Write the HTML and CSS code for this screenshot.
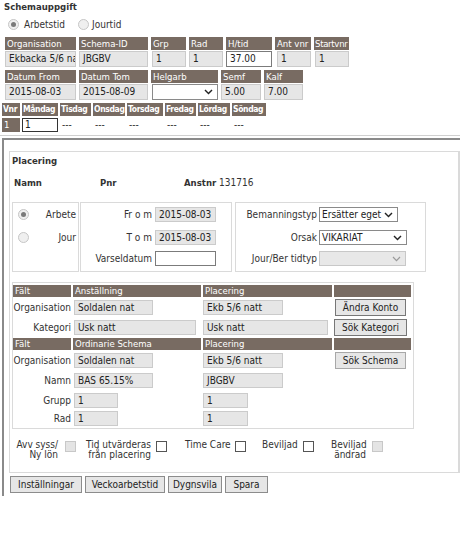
FILE: index.html
```html
<!DOCTYPE html>
<html lang="sv">
<head>
<meta charset="utf-8">
<title>Schemauppgift</title>
<link rel="stylesheet" href="styles.css">
</head>
<body>
<div class="page">
  <div class="title">Schemauppgift</div>
  <div class="radios">
    <span class="radio on"></span><span class="rlabel">Arbetstid</span>
    <span class="radio second"></span><span class="rlabel">Jourtid</span>
  </div>

  <div class="g g1">
    <div class="hd">Organisation</div>
    <div class="hd">Schema-ID</div>
    <div class="hd">Grp</div>
    <div class="hd">Rad</div>
    <div class="hd">H/tid</div>
    <div class="hd">Ant vnr</div>
    <div class="hd tight">Startvnr</div>
    <div class="fld">Ekbacka 5/6 natt</div>
    <div class="fld">JBGBV</div>
    <div class="fld ind">1</div>
    <div class="fld">1</div>
    <div class="fld w">37.00</div>
    <div class="fld ind2">1</div>
    <div class="fld ind">1</div>
  </div>

  <div class="g g2">
    <div class="hd">Datum From</div>
    <div class="hd">Datum Tom</div>
    <div class="hd">Helgarb</div>
    <div class="hd">Semf</div>
    <div class="hd">Kalf</div>
    <div class="fld">2015-08-03</div>
    <div class="fld">2015-08-09</div>
    <div class="sel ind"><span></span><svg width="9" height="6" viewBox="0 0 9 6"><path d="M1 1 L4.5 4.6 L8 1" fill="none" stroke="#222" stroke-width="1.4"/></svg></div>
    <div class="fld">5.00</div>
    <div class="fld">7.00</div>
  </div>

  <div class="g3">
    <div class="hd b">Vnr</div>
    <div class="hd b">Måndag</div>
    <div class="hd b">Tisdag</div>
    <div class="hd b">Onsdag</div>
    <div class="hd b">Torsdag</div>
    <div class="hd b">Fredag</div>
    <div class="hd b">Lördag</div>
    <div class="hd b">Söndag</div>
    <div class="hd">1</div>
    <div class="fld w dark">1</div>
    <div class="dash">---</div>
    <div class="dash">---</div>
    <div class="dash">---</div>
    <div class="dash">---</div>
    <div class="dash">---</div>
    <div class="dash">---</div>
  </div>

  <div class="sep"></div>

  <div class="outer">
    <div class="inner">
      <div class="ptitle">Placering</div>
      <div class="who">
        <span class="namn">Namn</span>
        <span class="pnr">Pnr</span>
        <span><b>Anstnr</b> 131716</span>
      </div>

      <div class="boxes">
        <div class="box box1">
          <div class="brow"><span class="radio on"></span><span>Arbete</span></div>
          <div class="brow second"><span class="radio"></span><span>Jour</span></div>
        </div>
        <div class="box box2">
          <div class="frow"><span class="lbl">Fr o m</span><div class="fld dt">2015-08-03</div></div>
          <div class="frow r2"><span class="lbl">T o m</span><div class="fld dt">2015-08-03</div></div>
          <div class="frow r3"><span class="lbl">Varseldatum</span><div class="fld dt w"></div></div>
        </div>
        <div class="box box3">
          <div class="frow"><span class="lbl">Bemanningstyp</span><div class="sel s1"><span>Ersätter eget</span><svg width="9" height="6" viewBox="0 0 9 6"><path d="M1 1 L4.5 4.6 L8 1" fill="none" stroke="#222" stroke-width="1.4"/></svg></div></div>
          <div class="frow r2"><span class="lbl">Orsak</span><div class="sel s2"><span>VIKARIAT</span><svg width="9" height="6" viewBox="0 0 9 6"><path d="M1 1 L4.5 4.6 L8 1" fill="none" stroke="#222" stroke-width="1.4"/></svg></div></div>
          <div class="frow r3"><span class="lbl">Jour/Ber tidtyp</span><div class="sel s3 dis"><span></span><svg width="9" height="6" viewBox="0 0 9 6"><path d="M1 1 L4.5 4.6 L8 1" fill="none" stroke="#9a9a9a" stroke-width="1.2"/></svg></div></div>
        </div>
      </div>

      <div class="tbox">
        <div class="tgrid">
          <div class="hd">Fält</div>
          <div class="hd">Anställning</div>
          <div class="hd">Placering</div>
          <div class="hd"></div>

          <div class="tl">Organisation</div>
          <div class="tc"><div class="fld t w79">Soldalen nat</div></div>
          <div class="tc"><div class="fld t p80">Ekb 5/6 natt</div></div>
          <div class="tc"><div class="btn dk b71">Ändra Konto</div></div>

          <div class="tl">Kategori</div>
          <div class="tc"><div class="fld t w122">Usk natt</div></div>
          <div class="tc"><div class="fld t p125">Usk natt</div></div>
          <div class="tc"><div class="btn dk b73">Sök Kategori</div></div>

          <div class="hd">Fält</div>
          <div class="hd">Ordinarie Schema</div>
          <div class="hd">Placering</div>
          <div class="hd"></div>

          <div class="tl">Organisation</div>
          <div class="tc"><div class="fld t w79">Soldalen nat</div></div>
          <div class="tc"><div class="fld t p80">Ekb 5/6 natt</div></div>
          <div class="tc"><div class="btn b71">Sök Schema</div></div>

          <div class="tl">Namn</div>
          <div class="tc"><div class="fld t w79">BAS 65.15%</div></div>
          <div class="tc"><div class="fld t p80">JBGBV</div></div>
          <div class="tc"></div>

          <div class="tl">Grupp</div>
          <div class="tc"><div class="fld t w44">1</div></div>
          <div class="tc"><div class="fld t p45">1</div></div>
          <div class="tc"></div>

          <div class="tl">Rad</div>
          <div class="tc"><div class="fld t w44">1</div></div>
          <div class="tc"><div class="fld t p45">1</div></div>
          <div class="tc"></div>
        </div>
      </div>

      <div class="checks">
        <div class="ck c1"><span class="cl">Avv syss/<br>Ny lön</span><span class="cb dis"></span></div>
        <div class="ck c2"><span class="cl">Tid utvärderas<br>från placering</span><span class="cb"></span></div>
        <div class="ck c3"><span class="cl">Time Care</span><span class="cb"></span></div>
        <div class="ck c4"><span class="cl">Beviljad</span><span class="cb"></span></div>
        <div class="ck c5"><span class="cl">Beviljad<br>ändrad</span><span class="cb dis"></span></div>
      </div>
    </div>

    <div class="btns">
      <div class="btn bb1">Inställningar</div>
      <div class="btn bb2">Veckoarbetstid</div>
      <div class="btn bb3">Dygnsvila</div>
      <div class="btn bb4">Spara</div>
    </div>
  </div>
</div>
</body>
</html>
```

FILE: styles.css
```css
* { box-sizing: border-box; }

body {
  margin: 0;
  background: #fff;
  font-family: "DejaVu Sans Condensed", "DejaVu Sans", sans-serif;
  font-stretch: condensed;
  font-size: 10px;
  color: #333;
}

b { font-size: 9.5px; }

.page { width: 474px; }

.title {
  font-weight: bold;
  font-size: 9.5px;
  padding-left: 4px;
  height: 14px;
  line-height: 14px;
}

.radios {
  display: flex;
  align-items: center;
  height: 12px;
  margin-top: 4px;
  padding-left: 8px;
}

.radio {
  width: 11px;
  height: 11px;
  border-radius: 50%;
  border: 1px solid #c6c6c6;
  background: #efefef;
  display: inline-flex;
  align-items: center;
  justify-content: center;
  flex: none;
}

.radio.on::after {
  content: "";
  width: 5px;
  height: 5px;
  border-radius: 50%;
  background: #7a7a7a;
}

.rlabel { margin-left: 5px; }
.radio.second { margin-left: 13px; }
.radio.second + .rlabel { margin-left: 3px; }

/* top grids */
.g {
  display: grid;
  column-gap: 3px;
  row-gap: 1px;
  grid-template-rows: 13px 16px;
  margin-left: 5px;
}

.g1 {
  grid-template-columns: 71px 69px 35px 34px 46px 36px 35px;
  margin-top: 7px;
}

.g2 {
  grid-template-columns: 71px 69px 67px 40px 39px;
  margin-top: 3px;
}

.hd {
  background: #786b62;
  color: #fff;
  font-size: 9.5px;
  line-height: 13px;
  padding-left: 2px;
  white-space: nowrap;
  overflow: hidden;
}

.hd.tight {
  padding-left: 1px;
  letter-spacing: -0.3px;
}

.fld {
  height: 16px;
  line-height: 14px;
  border: 1px solid #cbcbcb;
  background: #e6e6e6;
  padding-left: 3px;
  white-space: nowrap;
  overflow: hidden;
  color: #222;
}

.fld.w { background: #fff; border-color: #7b7b7b; }
.fld.dark { border-color: #333; }
.ind { margin-left: 1px; }
.ind2 { margin-left: 2px; }

.sel {
  height: 16px;
  display: flex;
  align-items: center;
  justify-content: space-between;
  border: 1px solid #8a8a8a;
  background: #fff;
  padding: 0 4px 0 2px;
  color: #222;
  white-space: nowrap;
}

.sel.dis { background: #e8e8e8; border-color: #c8c8c8; }

/* week grid */
.g3 {
  display: grid;
  grid-template-columns: 18px 36px 31px 32px 36px 31px 32px 34px;
  column-gap: 2px;
  row-gap: 2px;
  grid-template-rows: 13px 14px;
  margin-left: 2px;
  margin-top: 3px;
}

.hd.b {
  font-weight: bold;
  font-size: 8.5px;
  padding-left: 1px;
  letter-spacing: -0.35px;
}

.g3 .fld { height: 14px; line-height: 12px; padding-left: 2px; }

.dash {
  line-height: 14px;
  padding-left: 2px;
  color: #333;
}

.sep {
  width: 460px;
  border-top: 1px solid #d0d0d0;
  margin-top: 3px;
}

.outer {
  width: 458px;
  margin-left: 2px;
  margin-top: 2px;
  border-top: 2px solid #8a8a8a;
  border-left: 2px solid #8a8a8a;
  padding: 11px 0 3px 5px;
}

.inner {
  border: 1px solid #dadada;
  border-right-width: 2px;
  padding: 2px 0 12px 2px;
}

.ptitle {
  font-weight: bold;
  font-size: 9.5px;
  line-height: 14px;
}

.who {
  display: flex;
  margin-top: 8px;
  line-height: 14px;
  padding-left: 2px;
}

.who .namn { width: 86px; font-weight: bold; font-size: 9.5px; }
.who .pnr { width: 84px; font-weight: bold; font-size: 9.5px; }

.boxes {
  display: flex;
  margin-top: 12px;
  height: 70px;
}

.box {
  border: 1px solid #dadada;
  height: 70px;
}

.box1 {
  width: 67px;
  padding: 5px 2px 0 5px;
}

.brow {
  display: flex;
  justify-content: space-between;
  align-items: center;
  height: 12px;
}

.brow.second { margin-top: 11px; }

.box2 {
  width: 152px;
  margin-left: 1px;
  padding-top: 4px;
}

.frow {
  display: flex;
  align-items: center;
  height: 15px;
}

.frow.r2 { margin-top: 8px; }
.frow.r3 { margin-top: 6px; }

.box2 .lbl {
  width: 71px;
  text-align: right;
  margin-right: 3px;
}

.fld.dt { width: 61px; height: 15px; line-height: 13px; }

.box3 {
  width: 191px;
  margin-left: 3px;
  padding-top: 4px;
}

.frow .sel { height: 15px; }

.box3 .lbl {
  width: 81px;
  text-align: right;
  margin-right: 2px;
}

.s1 { width: 79px; }
.s2 { width: 88px; }
.s3 { width: 87px; }

/* table */
.tbox {
  margin-top: 10px;
  width: 402px;
  border: 1px solid #dadada;
  padding: 2px 0 1px 0;
}

.tgrid {
  display: grid;
  grid-template-columns: 58px 128px 129px 77px;
  grid-template-rows: 12px 19px 19px 12px 19px 19px 18px 17px;
  column-gap: 2px;
  row-gap: 1px;
}

.tgrid .hd { line-height: 12px; }

.tl {
  display: flex;
  align-items: center;
  justify-content: flex-end;
}

.tc {
  display: flex;
  align-items: center;
}

.fld.t { height: 15px; line-height: 13px; }

.w79 { width: 79px; margin-left: 1px; }
.w122 { width: 122px; margin-left: 1px; }
.w44 { width: 44px; margin-left: 1px; }
.p80 { width: 80px; }
.p125 { width: 125px; }
.p45 { width: 45px; }

.btn {
  height: 17px;
  line-height: 15px;
  border: 1px solid #a8a8a8;
  background: #e6e6e6;
  text-align: center;
  color: #222;
  white-space: nowrap;
}

.btn.dk { border-color: #777; }
.b71 { width: 71px; margin-left: 1px; }
.b73 { width: 73px; }

/* checks */
.checks {
  display: flex;
  align-items: flex-start;
  margin-top: 11px;
  line-height: 10px;
}

.ck {
  display: flex;
  align-items: flex-start;
}

.cl { text-align: right; white-space: nowrap; }

.cb {
  width: 11px;
  height: 11px;
  border: 1px solid #555;
  background: #fff;
  margin-top: 1px;
  flex: none;
}

.cb.dis { background: #e4e4e4; border-color: #c8c8c8; }

.c1 { margin-left: 1px; }
.c1 .cl { width: 45px; }
.c1 .cb { margin-left: 7px; }
.c2 { margin-left: 7px; }
.c2 .cl { width: 68px; }
.c2 .cb { margin-left: 5px; }
.c3 { margin-left: 18px; }
.c3 .cl { width: 44px; }
.c3 .cb { margin-left: 6px; }
.c4 { margin-left: 16px; }
.c4 .cl { width: 35px; }
.c4 .cb { margin-left: 6px; }
.c5 { margin-left: 17px; }
.c5 .cl { width: 35px; }
.c5 .cb { margin-left: 6px; }

/* bottom buttons */
.btns {
  display: flex;
  gap: 3px;
  margin-top: 3px;
  margin-left: 1px;
}

.btns .btn { border-color: #8c8c8c; }
.bb1 { width: 72px; }
.bb2 { width: 80px; }
.bb3 { width: 54px; }
.bb4 { width: 43px; }
```
